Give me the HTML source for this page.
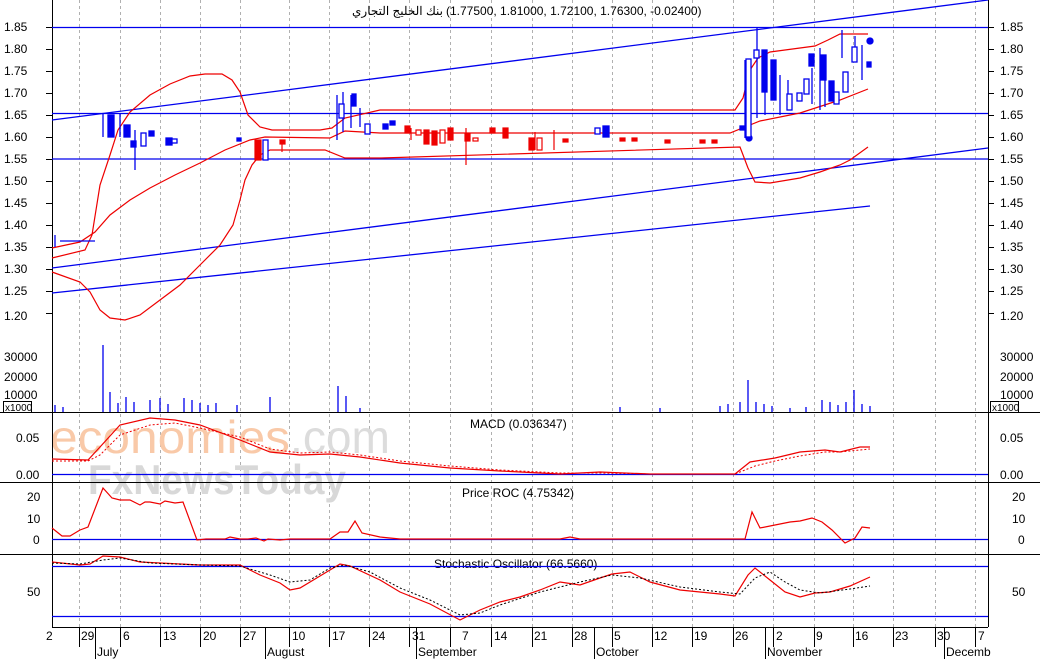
<!DOCTYPE html>
<html><head><meta charset="utf-8"><style>
html,body{margin:0;padding:0;background:#fff;}
svg{display:block;font-family:"Liberation Sans",Arial,sans-serif;}
</style></head><body>
<svg width="1040" height="659" viewBox="0 0 1040 659" xmlns="http://www.w3.org/2000/svg">
<rect width="1040" height="659" fill="#fff"/>
<g stroke="#b0b0b0" stroke-dasharray="3,3" stroke-width="1">
<path d="M79.5 0V627M120.5 0V627M160.5 0V627M200.5 0V627M240.5 0V627M289.5 0V627M329.5 0V627M369.5 0V627M409.5 0V627M450.5 0V627M491.5 0V627M532.5 0V627M572.5 0V627M612.5 0V627M652.5 0V627M692.5 0V627M733.5 0V627M773.5 0V627M814.5 0V627M853.5 0V627M893.5 0V627M935.5 0V627M975.5 0V627"/>
</g>
<text x="50" y="453" font-size="46" fill="#f9c9a8" textLength="240" lengthAdjust="spacingAndGlyphs">economies</text>
<text x="290" y="453" font-size="46" fill="#dcdcdc" textLength="100" lengthAdjust="spacingAndGlyphs">.com</text>
<text x="88" y="494" font-size="42" fill="#d8d8d8" font-weight="bold" textLength="258" lengthAdjust="spacingAndGlyphs">FxNewsToday</text>
<g stroke="#000" stroke-width="1" fill="none">
<path d="M52.5 0V627M988.5 0V627M52 412.5H988M52 482.5H988M52 554.5H988M52 627.5H988"/>
<path d="M0 412.5H52M988 412.5H1040M0 482.5H52M988 482.5H1040M0 554.5H52M988 554.5H1040"/>
</g>
<g stroke="#000" stroke-width="1">
<path d="M46 27.5h6M46 49.5h6M46 71.5h6M46 93.5h6M46 115.5h6M46 137.5h6M46 159.5h6M46 181.5h6M46 203.5h6M46 225.5h6M46 247.5h6M46 269.5h6M46 291.5h6M46 313.5h6"/>
<path d="M988 27.5h6M988 49.5h6M988 71.5h6M988 93.5h6M988 115.5h6M988 137.5h6M988 159.5h6M988 181.5h6M988 203.5h6M988 225.5h6M988 247.5h6M988 269.5h6M988 291.5h6M988 313.5h6"/>
</g>
<g font-size="12" fill="#000">
<text x="4" y="31">1.85</text><text x="4" y="53">1.80</text><text x="4" y="75">1.75</text><text x="4" y="97">1.70</text><text x="4" y="119">1.65</text><text x="4" y="141">1.60</text><text x="4" y="163">1.55</text><text x="4" y="185">1.50</text><text x="4" y="207">1.45</text><text x="4" y="229">1.40</text><text x="4" y="251">1.35</text><text x="4" y="273">1.30</text><text x="4" y="295">1.25</text><text x="4" y="320">1.20</text>
<text x="1000" y="31">1.85</text><text x="1000" y="53">1.80</text><text x="1000" y="75">1.75</text><text x="1000" y="97">1.70</text><text x="1000" y="119">1.65</text><text x="1000" y="141">1.60</text><text x="1000" y="163">1.55</text><text x="1000" y="185">1.50</text><text x="1000" y="207">1.45</text><text x="1000" y="229">1.40</text><text x="1000" y="251">1.35</text><text x="1000" y="273">1.30</text><text x="1000" y="295">1.25</text><text x="1000" y="320">1.20</text>
<text x="4" y="361">30000</text><text x="4" y="381">20000</text><text x="4" y="399">10000</text>
<text x="1000" y="361">30000</text><text x="1000" y="381">20000</text><text x="1000" y="399">10000</text>
<text x="16" y="442">0.05</text><text x="16" y="479">0.00</text>
<text x="1000" y="442">0.05</text><text x="1000" y="479">0.00</text>
<text x="27" y="501">20</text><text x="27" y="523">10</text><text x="33" y="544">0</text>
<text x="1012" y="501">20</text><text x="1012" y="523">10</text><text x="1018" y="544">0</text>
<text x="27" y="596">50</text><text x="1012" y="596">50</text>
</g>
<rect x="3.5" y="401.5" width="28" height="11" fill="#fff" stroke="#000"/><text x="5" y="411" font-size="10">x1000</text>
<rect x="990.5" y="401.5" width="28" height="11" fill="#fff" stroke="#000"/><text x="992" y="411" font-size="10">x1000</text>
<text x="352" y="15" font-size="12" fill="#000">بنك الخليج التجاري</text>
<text x="446" y="15" font-size="12" fill="#000" direction="ltr" unicode-bidi="embed">(1.77500, 1.81000, 1.72100, 1.76300, -0.02400)</text>
<g stroke="#0000ee" stroke-width="1.3" fill="none">
<path d="M52 27.5H988M52 113.5H988M52 159H988"/>
<path d="M52 120L988 0M52 268L988 148M52 293L870 206"/>
</g>
<g stroke="#ee0000" stroke-width="1.2" fill="none">
<polyline points="52,258 85,250 92,235 100,185 110,155 118,130 130,112 150,95 170,84 190,76 205,74 222,74 232,80 240,92 248,115 260,127 272,130 320,130 332,128 345,118 380,110 735,110 743,98 750,70 758,58 770,52 815,46 828,40 840,34 868,34"/>
<polyline points="52,272 80,282 90,292 100,310 110,318 125,320 140,315 160,300 180,285 200,265 220,245 233,225 240,200 245,180 252,165 260,155 270,150 325,150 345,158 380,158 740,147 748,168 755,182 770,183 800,178 820,172 840,165 850,160 868,147"/>
<polyline points="52,248 80,242 95,232 110,215 130,200 150,188 175,175 200,163 225,150 250,140 265,137 330,138 345,131 380,133 730,133 745,127 760,121 800,113 840,100 868,89"/>
</g>
<g fill="#0000ee" stroke="#0000ee" stroke-width="1.3">
<path d="M55 235V247M103 114V137M120 114V137M135 130V170M143 133V145M60 241H95" fill="none"/>
<rect x="108" y="115" width="6" height="22"/><rect x="124" y="125" width="6" height="12"/><rect x="131" y="141" width="5" height="6"/><rect x="149" y="131" width="5" height="5"/>
<rect x="166" y="138" width="6" height="7"/><rect x="237" y="138" width="4" height="3"/>
<path d="M337 95V140M343 92V132M351 95V128M360 108V127" fill="none"/>
<rect x="352" y="94" width="4" height="12"/><rect x="383" y="124" width="5" height="5"/><rect x="390" y="121" width="5" height="4"/>
<rect x="603" y="126" width="6" height="11"/>
<path d="M745 60V138M757 28V118M765 75V115M780 75V115M788 80V107M812 68V104M820 48V110M825 70V107M842 30V58M855 36V58M862 45V80" fill="none"/>
<rect x="762" y="50" width="5" height="42"/><rect x="771" y="60" width="5" height="40"/><rect x="809" y="54" width="5" height="12"/><rect x="821" y="55" width="5" height="25"/><rect x="829" y="81" width="5" height="20"/><rect x="867" y="62" width="4" height="5"/>
<rect x="740" y="126" width="4" height="4"/>
<circle cx="749" cy="138" r="3"/><circle cx="870" cy="41" r="3"/>
</g>
<g fill="#fff" stroke="#0000ee" stroke-width="1.3">
<rect x="141" y="133" width="5" height="13"/><rect x="172" y="139" width="5" height="4"/><rect x="263" y="140" width="5" height="20"/>
<rect x="339" y="104" width="5" height="14"/><rect x="365" y="124" width="5" height="10"/><rect x="595" y="128" width="5" height="6"/>
<rect x="746" y="59" width="5" height="78"/><rect x="754" y="50" width="5" height="8"/><rect x="787" y="94" width="5" height="16"/><rect x="797" y="93" width="5" height="8"/><rect x="804" y="79" width="5" height="15"/><rect x="834" y="92" width="5" height="12"/><rect x="843" y="72" width="5" height="20"/><rect x="852" y="47" width="5" height="15"/>
</g>
<g fill="#ee0000" stroke="#ee0000" stroke-width="1.2">
<rect x="255" y="140" width="6" height="20"/><rect x="280" y="140" width="5" height="4"/><path d="M282 140V152" fill="none"/>
<rect x="405" y="126" width="5" height="7"/><rect x="424" y="130" width="5" height="14"/><rect x="432" y="131" width="5" height="14"/><rect x="448" y="128" width="5" height="12"/><rect x="465" y="134" width="5" height="7"/>
<rect x="490" y="128" width="5" height="5"/><rect x="503" y="128" width="5" height="10"/><rect x="529" y="138" width="5" height="12"/><rect x="563" y="139" width="5" height="3"/>
<rect x="620" y="138" width="5" height="3"/><rect x="632" y="138" width="5" height="3"/><rect x="665" y="140" width="5" height="3"/><rect x="700" y="140" width="5" height="3"/><rect x="712" y="140" width="5" height="3"/>
<path d="M466 128V165M411 128V140M535 132V150M554 130V150" fill="none"/>
</g>
<g fill="#fff" stroke="#ee0000" stroke-width="1.2">
<rect x="440" y="130" width="5" height="13"/><rect x="473" y="138" width="5" height="3"/><rect x="537" y="138" width="5" height="12"/><rect x="416" y="130" width="5" height="5"/>
</g>
<g stroke="#0000ee" stroke-width="1.3">
<path d="M55 405V412M63 407V412M103 345V412M110 392V412M118 403V412M126 397V412M134 402V412M150 400V412M160 398V412M168 404V412M184 398V412M192 400V412M200 403V412M208 405V412M216 403V412M237 405V412M270 397V412M338 386V412M346 396V412M360 408V412M620 407V412M660 408V412M720 406V412M728 404V412M740 402V412M748 380V412M756 402V412M764 404V412M772 406V412M790 408V412M806 407V412M822 400V412M830 402V412M838 405V412M846 402V412M854 390V412M862 404V412M870 406V412"/>
</g>
<text x="470" y="428" font-size="12">MACD (0.036347)</text>
<path d="M52 474.5H988" stroke="#0000ee" stroke-width="1.3"/>
<polyline fill="none" stroke="#ee0000" stroke-width="1.2" points="52,459 88,460 100,447 120,425 150,418 175,420 200,425 240,440 270,452 300,455 330,454 360,457 400,463 450,468 500,471 560,474 600,472 650,474 700,474 735,474 750,462 775,458 800,452 825,450 840,452 860,447 870,447"/>
<polyline fill="none" stroke="#ee0000" stroke-width="1" stroke-dasharray="2,2" points="52,461 88,461 100,455 120,435 150,425 175,423 200,428 240,437 270,449 300,453 330,452 360,455 400,461 450,466 500,470 560,473 600,473 650,474 700,474 735,474 755,466 775,461 800,456 825,452 840,452 860,450 870,449"/>
<text x="462" y="497" font-size="12">Price ROC (4.75342)</text>
<path d="M52 539.5H988" stroke="#0000ee" stroke-width="1.3"/>
<polyline fill="none" stroke="#ee0000" stroke-width="1.2" points="52,528 62,536 70,536 80,530 88,527 103,488 112,498 120,500 130,500 140,505 145,502 150,502 160,504 165,501 175,503 183,502 197,540 206,539 225,539 230,537 240,539 248,539 256,538 264,541 268,539 280,540 290,539 330,539 340,532 348,532 355,521 362,533 380,537 400,539 560,539 570,537 580,539 745,539 752,512 760,528 775,525 790,522 800,521 812,518 822,522 832,530 845,543 855,538 862,527 870,528"/>
<text x="434" y="568" font-size="12">Stochastic Oscillator (66.5660)</text>
<path d="M52 566.5H988M52 616.5H988" stroke="#0000ee" stroke-width="1.3"/>
<polyline fill="none" stroke="#ee0000" stroke-width="1.2" points="52,562 80,565 90,564 103,556 120,557 140,562 160,563 200,565 240,565 260,575 280,583 290,590 300,588 320,576 340,564 350,566 380,580 400,592 430,604 460,620 480,610 500,602 520,597 540,590 560,582 580,585 600,578 612,574 630,572 650,582 680,590 720,594 735,596 748,575 755,568 770,580 785,592 800,597 815,593 830,592 850,586 870,577"/>
<polyline fill="none" stroke="#000" stroke-width="1" stroke-dasharray="2,2" points="52,563 80,564 103,560 120,558 150,563 200,565 240,566 270,575 290,582 310,580 330,568 345,565 370,572 400,588 430,600 460,615 480,613 500,605 540,592 580,582 612,575 640,578 680,587 720,592 740,594 755,578 770,572 785,582 800,590 820,593 850,589 870,586"/>
<g stroke="#000" stroke-width="1"><path d="M79.5 627V647M120.5 627V647M160.5 627V647M200.5 627V647M240.5 627V647M289.5 627V647M329.5 627V647M369.5 627V647M409.5 627V647M450.5 627V647M491.5 627V647M532.5 627V647M572.5 627V647M612.5 627V647M652.5 627V647M692.5 627V647M733.5 627V647M773.5 627V647M814.5 627V647M853.5 627V647M893.5 627V647M935.5 627V647M975.5 627V647M95.5 627V659M265.5 627V659M416.5 627V659M594.5 627V659M765.5 627V659M944.5 627V659"/></g>
<g font-size="12">
<text x="46" y="640">2</text><text x="81" y="640">29</text><text x="123" y="640">6</text><text x="163" y="640">13</text><text x="203" y="640">20</text><text x="243" y="640">27</text><text x="292" y="640">10</text><text x="332" y="640">17</text><text x="372" y="640">24</text><text x="412" y="640">31</text><text x="462" y="640">7</text><text x="494" y="640">14</text><text x="534" y="640">21</text><text x="574" y="640">28</text><text x="614" y="640">5</text><text x="654" y="640">12</text><text x="694" y="640">19</text><text x="735" y="640">26</text><text x="776" y="640">2</text><text x="816" y="640">9</text><text x="855" y="640">16</text><text x="895" y="640">23</text><text x="937" y="640">30</text><text x="978" y="640">7</text>
<text x="97" y="656">July</text><text x="267" y="656">August</text><text x="418" y="656">September</text><text x="596" y="656">October</text><text x="767" y="656">November</text><text x="946" y="656">Decemb</text>
</g>
</svg>
</body></html>
